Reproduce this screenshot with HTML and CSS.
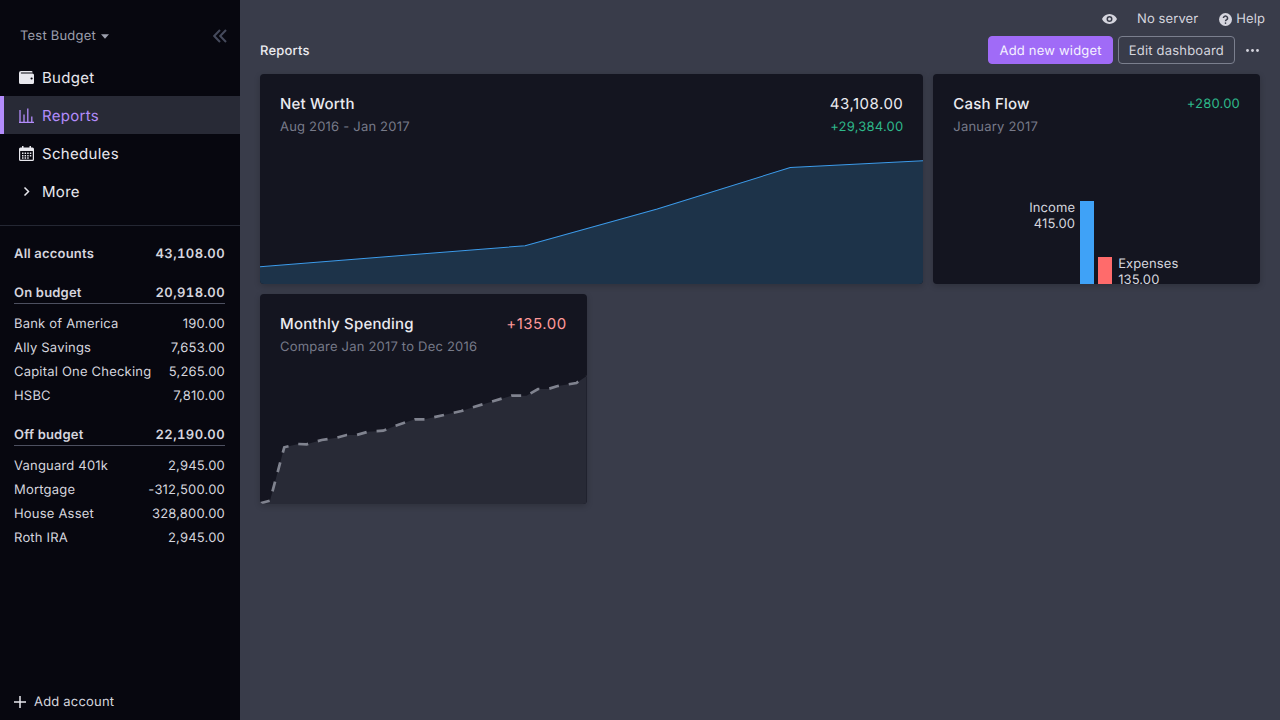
FILE: index.html
```html
<!DOCTYPE html>
<html lang="en">
<head>
    <meta charset="UTF-8">
    <title>Reports</title>
    <link rel="stylesheet" href="styles.css">
</head>
<body>
    <aside class="sidebar">
        <div class="budget-head">
            <span class="budget-name">Test Budget</span>
            <svg class="caret" viewBox="0 0 10 6"><path d="M0 .3h10L5 5.700z"/></svg>
            <svg class="collapse" viewBox="0 0 14 14"><path d="M7 1 1.200 7 7 13M13 1 7.200 7 13 13"/></svg>
        </div>

        <nav class="nav">
            <a class="nav-item">
                <svg class="nav-icon" viewBox="0 0 15 13"><path fill-rule="evenodd" d="M2 0h10.500a1 1 0 0 1 1 1v.6H2.200C1.600 1.600 1.600 2.400 2.200 2.400h11.300A1.500 1.500 0 0 1 15 3.900v7.600A1.500 1.500 0 0 1 13.500 13h-12A1.500 1.500 0 0 1 0 11.500V2a2 2 0 0 1 2-2zm10.600 6.400a1.100 1.100 0 1 0 0 2.200 1.100 1.100 0 0 0 0-2.200z"/></svg>
                <span>Budget</span>
            </a>
            <a class="nav-item active">
                <svg class="nav-icon" viewBox="0 0 15 15"><path class="bars" d="M0 14.400H15M1 14V2M5 14V6.500M8.800 14V.5M12.800 14V8.500"/></svg>
                <span>Reports</span>
            </a>
            <a class="nav-item">
                <svg class="nav-icon" viewBox="0 0 15 15"><path fill-rule="evenodd" d="M3 0h1.500v1.500h6V0H12v1.500h1.500A1.500 1.500 0 0 1 15 3v10.500a1.500 1.500 0 0 1-1.500 1.500h-12A1.500 1.500 0 0 1 0 13.500V3a1.500 1.500 0 0 1 1.500-1.500H3zM1.200 5v8.300a.5.5 0 0 0 .5.500h11.600a.5.5 0 0 0 .5-.5V5zM3 6.500h1.500V8H3zm2.600 0h1.500V8H5.600zm2.600 0h1.500V8H8.200zm2.600 0h1.500V8h-1.500zM3 9h1.500v1.500H3zm2.600 0h1.500v1.500H5.600zm2.600 0h1.500v1.500H8.200zm2.600 0h1.500v1.500h-1.500zM3 11.300h1.500v1.500H3zm2.600 0h1.500v1.500H5.600zm2.600 0h1.500v1.500H8.200z"/></svg>
                <span>Schedules</span>
            </a>
            <a class="nav-item">
                <svg class="nav-icon chevron" viewBox="0 0 15 15"><path d="M5.500 3.500 9.500 7.500 5.500 11.500"/></svg>
                <span>More</span>
            </a>
        </nav>

        <div class="accounts">
            <div class="acct-row total"><span>All accounts</span><span class="num">43,108.00</span></div>

            <div class="acct-row group"><span>On budget</span><span class="num">20,918.00</span></div>
            <div class="acct-row"><span>Bank of America</span><span>190.00</span></div>
            <div class="acct-row"><span>Ally Savings</span><span>7,653.00</span></div>
            <div class="acct-row"><span>Capital One Checking</span><span>5,265.00</span></div>
            <div class="acct-row"><span>HSBC</span><span>7,810.00</span></div>

            <div class="acct-row group"><span>Off budget</span><span class="num">22,190.00</span></div>
            <div class="acct-row"><span>Vanguard 401k</span><span>2,945.00</span></div>
            <div class="acct-row"><span>Mortgage</span><span>-312,500.00</span></div>
            <div class="acct-row"><span>House Asset</span><span>328,800.00</span></div>
            <div class="acct-row"><span>Roth IRA</span><span>2,945.00</span></div>
        </div>

        <div class="add-account">
            <svg class="plus" viewBox="0 0 12 12"><path d="M6 0v12M0 6h12"/></svg>
            <span>Add account</span>
        </div>
    </aside>

    <main class="main">
        <div class="topbar">
            <svg class="eye" viewBox="0 0 15 10"><path fill-rule="evenodd" d="M7.500 0C11 0 13.800 2.200 15 5c-1.200 2.800-4 5-7.500 5S1.200 7.800 0 5C1.200 2.200 4 0 7.500 0zm0 2a3 3 0 1 0 0 6 3 3 0 0 0 0-6zm0 1.500a1.500 1.500 0 1 1 0 3 1.500 1.500 0 0 1 0-3z"/></svg>
            <span class="server">No server</span>
            <span class="help">
                <svg class="help-icon" viewBox="0 0 13 13"><circle cx="6.500" cy="6.500" r="6.500"/><path class="q" d="M4.400 5a2.100 2 0 1 1 3.300 1.700c-.8.500-1.200.9-1.200 1.600"/><circle class="dot" cx="6.500" cy="10.100" r=".85"/></svg>
                <span>Help</span>
            </span>
        </div>

        <div class="page-head">
            <span class="page-title">Reports</span>
            <div class="actions">
                <button class="btn primary">Add new widget</button>
                <button class="btn">Edit dashboard</button>
                <svg class="dots" viewBox="0 0 13 3"><circle cx="1.500" cy="1.500" r="1.400"/><circle cx="6.500" cy="1.500" r="1.400"/><circle cx="11.500" cy="1.500" r="1.400"/></svg>
            </div>
        </div>

        <div class="widgets">
            <section class="card wide">
                <div class="card-head">
                    <div>
                        <div class="card-title">Net Worth</div>
                        <div class="card-sub">Aug 2016 - Jan 2017</div>
                    </div>
                    <div class="card-nums">
                        <div class="card-value">43,108.00</div>
                        <div class="card-change green">+29,384.00</div>
                    </div>
                </div>
                <svg class="chart" viewBox="0 0 663 140" preserveAspectRatio="none">
                    <path class="net-fill" d="M0 122.700 265 101.700 397 65 530 23.500 663 16.700V140H0z"/>
                    <path class="net-line" d="M0 122.700 265 101.700 397 65 530 23.500 663 16.700"/>
                </svg>
            </section>

            <section class="card">
                <div class="card-head">
                    <div>
                        <div class="card-title">Cash Flow</div>
                        <div class="card-sub">January 2017</div>
                    </div>
                    <div class="card-change green flow-total">+280.00</div>
                </div>
                <div class="flow">
                    <div class="flow-col">
                        <div class="flow-label income">Income<br>415.00</div>
                        <div class="bar bar-income"></div>
                    </div>
                    <div class="flow-col">
                        <div class="bar bar-expense"></div>
                        <div class="flow-label">Expenses<br>135.00</div>
                    </div>
                </div>
            </section>

            <section class="card">
                <div class="card-head">
                    <div>
                        <div class="card-title">Monthly Spending</div>
                        <div class="card-sub">Compare Jan 2017 to Dec 2016</div>
                    </div>
                    <div class="card-value red">+135.00</div>
                </div>
                <svg class="chart" viewBox="0 0 327 140" preserveAspectRatio="none">
                    <path class="spend-fill" d="M0 139.300 10 136.700 24.300 83.300 38.300 80 46.700 80.300 61.700 76 76.700 73.700 86.700 71 96.700 71 108.300 67.700 123.300 66.700 135 62 155 55.300 165 55.300 201.700 47 211.700 43.700 231.700 37.700 251.700 31.700 266.700 31.700 278.300 25 288.300 25 298 22 316.700 19 327 12V140H0z"/>
                    <path class="spend-line" d="M0 139.300 10 136.700 24.300 83.300 38.300 80 46.700 80.300 61.700 76 76.700 73.700 86.700 71 96.700 71 108.300 67.700 123.300 66.700 135 62 155 55.300 165 55.300 201.700 47 211.700 43.700 231.700 37.700 251.700 31.700 266.700 31.700 278.300 25 288.300 25 298 22 316.700 19 327 12"/>
                </svg>
            </section>
        </div>
    </main>
</body>
</html>
```

FILE: styles.css
```css
* {
    box-sizing: border-box;
}

body {
    margin: 0;
    height: 720px;
    display: flex;
    overflow: hidden;
    background-color: #393c4a;
    color: #d5d5de;
    font-family: Inter, "Noto Sans", sans-serif;
    font-size: 13px;
    letter-spacing: 0.2px;
    text-rendering: geometricPrecision;
}

/* sidebar */
.sidebar {
    width: 240px;
    flex-shrink: 0;
    display: flex;
    flex-direction: column;
    background-color: #07070f;
}

.budget-head {
    height: 58px;
    padding: 14px 13px 0 20px;
    display: flex;
    align-items: center;
    color: #9c9fad;
}

.caret {
    width: 8px;
    height: 5px;
    margin-left: 5px;
    fill: #9c9fad;
}

.collapse {
    width: 14px;
    height: 14px;
    margin-left: auto;
    fill: none;
    stroke: #454a5c;
    stroke-width: 2;
}

.nav {
    padding-bottom: 15px;
    border-bottom: 1px solid #242733;
}

.nav-item {
    height: 38px;
    padding-left: 19px;
    display: flex;
    align-items: center;
    gap: 8px;
    font-size: 15px;
    letter-spacing: 0.3px;
    color: #e8e8ee;
}

.nav-item.active {
    padding-left: 15px;
    border-left: 4px solid #b38cfb;
    background-color: #282a36;
    color: #b38cfb;
}

.nav-icon {
    width: 15px;
    height: 15px;
    fill: currentColor;
}

.bars {
    fill: none;
    stroke: currentColor;
    stroke-width: 1.300;
}

.chevron {
    fill: none;
    stroke: currentColor;
    stroke-width: 1.500;
}

.accounts {
    flex: 1;
    padding: 15px 15px 0 14px;
}

.acct-row {
    height: 24px;
    padding-top: 2px;
    display: flex;
    align-items: center;
    justify-content: space-between;
    white-space: nowrap;
}

.total,
.group {
    font-weight: 600;
}

.num {
    font-variant-numeric: tabular-nums;
    letter-spacing: 0.4px;
}

.group {
    margin-top: 15px;
    margin-bottom: 7px;
    border-bottom: 1px solid #4d5060;
}

.add-account {
    height: 38px;
    padding: 2px 0 0 14px;
    display: flex;
    align-items: center;
    gap: 8px;
}

.plus {
    width: 12px;
    height: 12px;
    fill: none;
    stroke: #e8e8ee;
    stroke-width: 1.500;
}

/* main column */
.main {
    flex: 1;
    padding: 0 20px;
}

.topbar {
    height: 36px;
    margin-right: -5px;
    padding-top: 2px;
    display: flex;
    align-items: center;
    justify-content: flex-end;
    letter-spacing: 0.1px;
}

.eye {
    width: 15px;
    height: 10px;
    fill: #d5d5de;
}

.server {
    margin-left: 20px;
}

.help {
    margin-left: 21px;
    display: flex;
    align-items: center;
    gap: 4px;
}

.help-icon {
    width: 13px;
    height: 13px;
    fill: #d5d5de;
}

.help-icon .q {
    fill: none;
    stroke: #393c4a;
    stroke-width: 1.500;
}

.help-icon .dot {
    fill: #393c4a;
}

.page-head {
    height: 28px;
    margin-bottom: 10px;
    display: flex;
    align-items: center;
    justify-content: space-between;
}

.page-title {
    padding-top: 2px;
    font-weight: 500;
    color: #ebebf0;
}

.actions {
    display: flex;
    align-items: center;
    gap: 5px;
}

.btn {
    height: 28px;
    padding: 2px 10px 0;
    border: 1px solid #7b7f8e;
    border-radius: 4px;
    background: none;
    color: #d5d5de;
    font-family: inherit;
    font-size: 13px;
    letter-spacing: inherit;
    text-rendering: inherit;
}

.btn.primary {
    padding-left: 11px;
    border-color: #a06bf7;
    background-color: #a06bf7;
    color: #f5f2ff;
}

.dots {
    width: 13px;
    height: 3px;
    margin: 0 1px 0 6px;
    fill: #d5d5de;
}

.widgets {
    display: grid;
    grid-template-columns: repeat(3, 1fr);
    grid-auto-rows: 210px;
    gap: 10px;
}

.card {
    display: flex;
    flex-direction: column;
    overflow: hidden;
    border-radius: 4px;
    background-color: #141520;
    box-shadow: 0 2px 6px rgba(0, 0, 0, 0.2);
}

.card.wide {
    grid-column: span 2;
}

.card-head {
    height: 70px;
    padding: 20px 20px 0;
    display: flex;
    justify-content: space-between;
}

.card-title,
.card-value {
    font-size: 15px;
    font-weight: 500;
    line-height: 20px;
    color: #ebebf0;
}

.card-value {
    font-weight: 400;
    letter-spacing: 0.5px;
}

.card-sub {
    margin-top: 4px;
    line-height: 18px;
    color: #777a89;
}

.card-nums {
    text-align: right;
}

.card-change {
    margin-top: 4px;
    line-height: 18px;
}

.flow-total {
    margin-top: 0;
    line-height: 20px;
}

.green {
    color: #2eb88a;
}

.card-value.red {
    color: #ff9999;
}

.chart {
    width: 100%;
    height: 140px;
    display: block;
}

.net-fill {
    fill: #1d3349;
}

.net-line {
    fill: none;
    stroke: #3c9bea;
    stroke-width: 1;
}

.spend-fill {
    fill: #282a36;
}

.spend-line {
    fill: none;
    stroke: #80838f;
    stroke-width: 2.700;
    stroke-dasharray: 10 10;
}

/* cash flow bars */
.flow {
    flex: 1;
    margin-right: 1px;
    display: flex;
    justify-content: center;
    align-items: flex-end;
    gap: 4px;
}

.flow-col {
    width: 14px;
    display: flex;
    align-items: flex-start;
    position: relative;
}

.bar {
    width: 14px;
}

.bar-income {
    height: 83px;
    background-color: #3fa2f7;
}

.bar-expense {
    height: 27px;
    background-color: #ff6b6b;
}

.flow-label {
    position: absolute;
    top: -2px;
    padding-top: 1px;
    left: 20px;
    line-height: 16px;
    letter-spacing: 0.1px;
    white-space: nowrap;
}

.flow-label.income {
    left: auto;
    right: 19px;
    text-align: right;
}
```
